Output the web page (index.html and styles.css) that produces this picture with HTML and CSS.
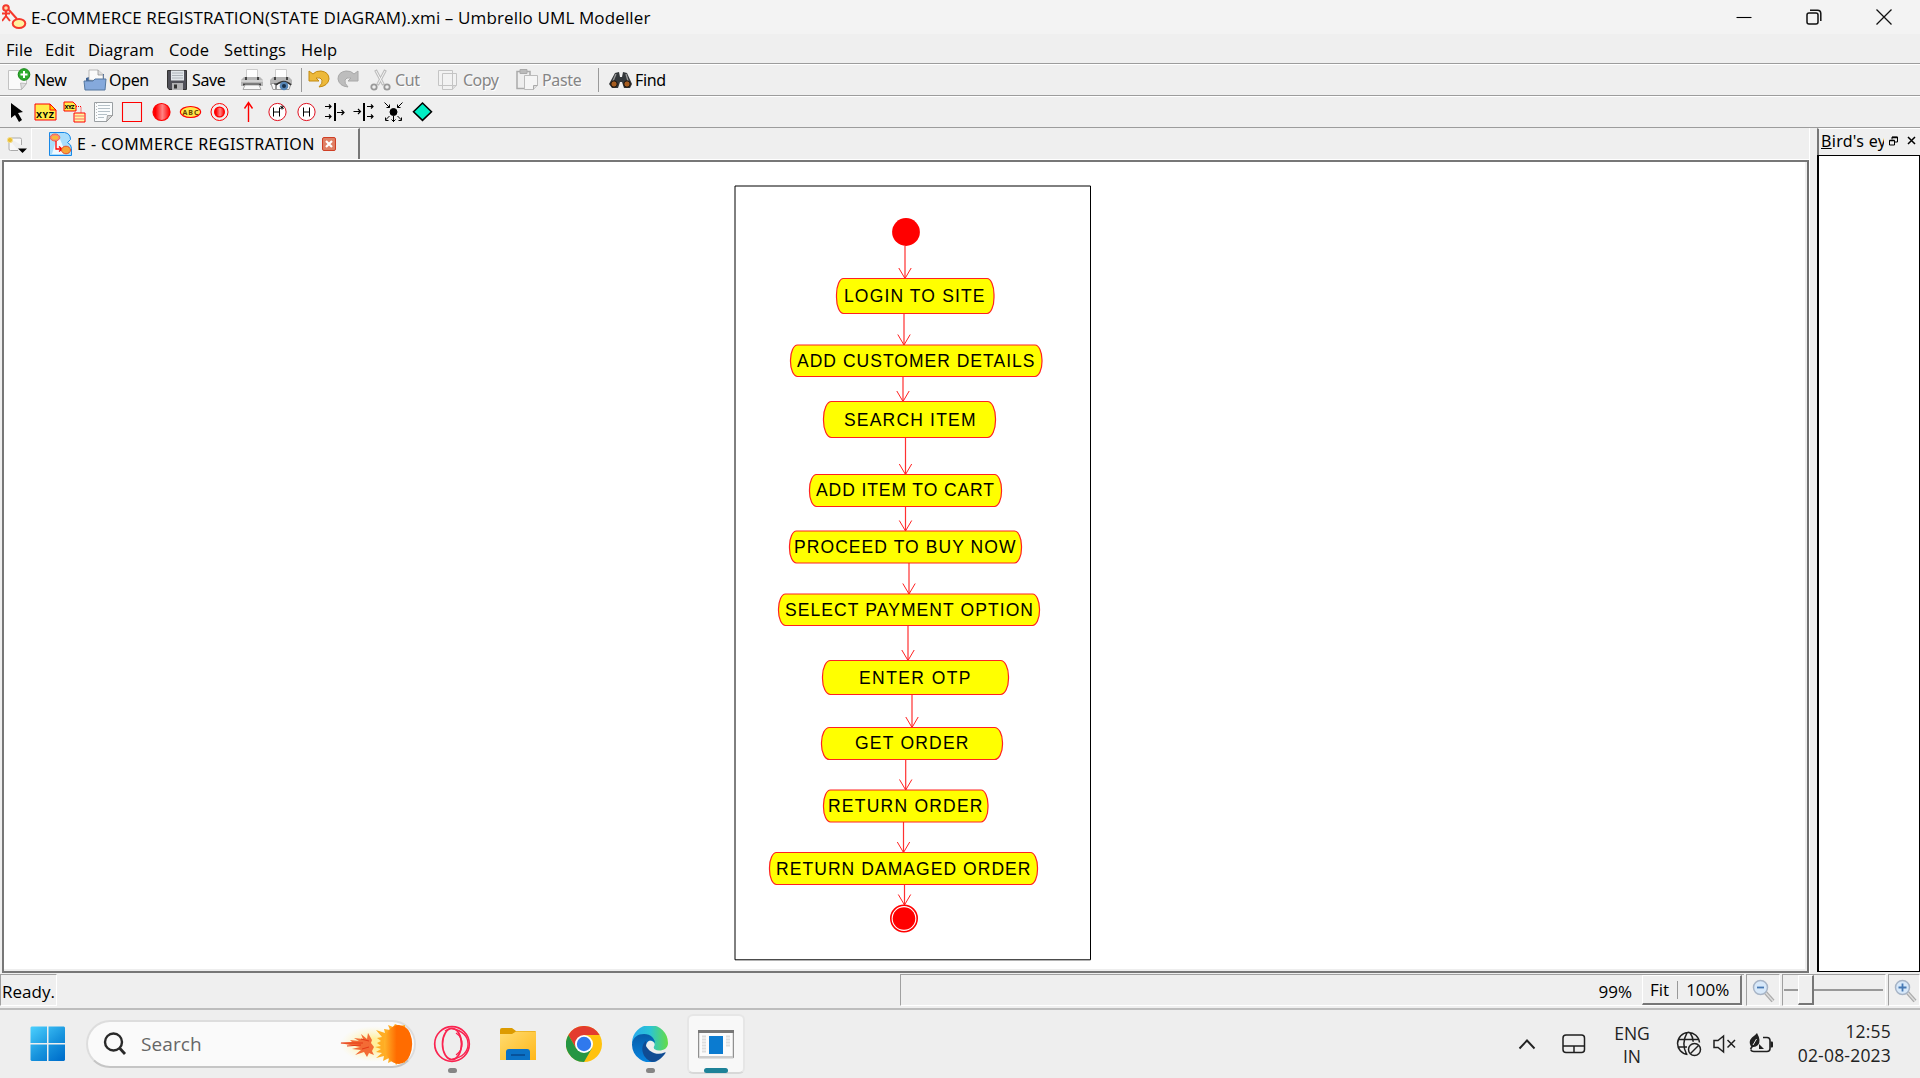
FILE: index.html
```html
<!DOCTYPE html>
<html lang="en">
<head>
<meta charset="utf-8">
<title>E-COMMERCE REGISTRATION(STATE DIAGRAM).xmi – Umbrello UML Modeller</title>
<link rel="stylesheet" href="styles.css">
</head>
<body>
<div class="screen">
  <header class="titlebar">
    <svg class="app-icon" width="25" height="26" viewBox="0 0 25 26" fill="none" stroke="#f5382c" stroke-width="2"><circle cx="4" cy="4" r="2.800" fill="#ffd9a8"/><path d="M4 7v6M0 9.500h8M4 12l-4 5M4 12l4 5M7 6l8 9"/><ellipse cx="17" cy="19.500" rx="6.300" ry="4.600" fill="#fff2a0"/></svg>
    <h1 class="title">E-COMMERCE REGISTRATION(STATE DIAGRAM).xmi – Umbrello UML Modeller</h1>
    <div class="window-buttons">
      <svg width="16" height="16" viewBox="0 0 16 16" stroke="#000" fill="none" stroke-width="1.1"><path d="M0.500 8.500h15"/></svg>
      <svg width="16" height="16" viewBox="0 0 16 16" stroke="#111" fill="none" stroke-width="1.500"><rect x="1" y="4" width="11" height="11" rx="2"/><path d="M4 1.200h7.500a3.300 3.300 0 0 1 3.300 3.300V12"/></svg>
      <svg width="16" height="16" viewBox="0 0 16 16" stroke="#111" fill="none" stroke-width="1.300"><path d="M.5.5l15 15M15.500.5l-15 15"/></svg>
    </div>
  </header>
  <nav class="menubar">
    <span class="m-file">File</span><span class="m-edit">Edit</span><span class="m-diagram">Diagram</span><span class="m-code">Code</span><span class="m-settings">Settings</span><span class="m-help">Help</span>
  </nav>
  <div class="toolbar main-tools">
    <button class="tool t-new"><svg width="24" height="24" viewBox="0 0 24 24"><path d="M1.500 2.500h18v13l-5 6h-13z" fill="#fafafa" stroke="#c2c2c2"/><path d="M19.500 15.500l-6-.5 1 6.500z" fill="#ddd" stroke="#aaa" stroke-width=".7"/><circle cx="17" cy="6.500" r="5.800" fill="#2eab2e" stroke="#118411"/><path d="M17 3v7M13.500 6.500h7" stroke="#fff" stroke-width="2"/></svg>New</button>
    <button class="tool t-open"><svg width="24" height="24" viewBox="0 0 24 24"><path d="M3 20V10l3-1V6h15v14z" fill="#3d6396"/><path d="M6 12V2h9l5 4.500V13z" fill="#fafafa" stroke="#aaa" stroke-width=".8"/><path d="M15 2v5h5" fill="#ddd" stroke="#888" stroke-width=".7"/><path d="M1 13h9l2-2h11l-1 11H2z" fill="#85a9dc" stroke="#54779f"/></svg>Open</button>
    <button class="tool t-save"><svg width="22" height="24" viewBox="0 0 22 24"><path d="M1.500 2.500h19v19H3l-1.500-2z" fill="#505058" stroke="#333"/><path d="M5 2.500h13v10H5z" fill="#e2e7eb"/><path d="M6 5h11M6 7.500h11M6 10h11" stroke="#aeb4ba"/><path d="M6 15h11v7H6z" fill="#b3b3b5"/><path d="M8 16.500h3v4H8z" fill="#333"/></svg>Save</button>
    <svg class="t-print" width="22" height="24" viewBox="0 0 22 24"><path d="M5.500 1.500h11v9h-11z" fill="#fff" stroke="#ccc"/><path d="M3 9h16l3 3v6H0v-6z" fill="#b5b5b5"/><path d="M4 9h2v3H4zM16 9h2v3h-2z" fill="#444"/><path d="M0 13h22" stroke="#eee"/><path d="M2 15.500h18v2H2z" fill="#444"/><path d="M4 17h14l2 4.500H2z" fill="#f8f8f8" stroke="#aaa"/></svg>
    <svg class="t-preview" width="23" height="24" viewBox="0 0 23 24"><path d="M5.500 1.500h11v9h-11z" fill="#fff" stroke="#ccc"/><path d="M3 9h16l3 3v5H0v-5z" fill="#b5b5b5"/><path d="M4 9h2v3H4zM16 9h2v3h-2z" fill="#444"/><path d="M1 15.500h20l-2 6H3z" fill="#f8f8f8" stroke="#999"/><path d="M6 17q8-7 15 0" stroke="#333" stroke-width="1.500" fill="none"/><circle cx="14" cy="18" r="4.300" fill="#5685b5"/><circle cx="14" cy="18" r="2" fill="#182f46"/><path d="M4 16h4M6 16v5" stroke="#333"/></svg>
    <i class="separator"></i>
    <svg class="t-undo" width="24" height="24" viewBox="0 0 24 24"><path d="M2 3v10h10l-3-3q5-1 6 2 1 3-3 7 9-1 10-8 0-7-8-8-5-.5-8 3z" fill="#edb93a" stroke="#c38a10"/></svg>
    <svg class="t-redo" width="24" height="24" viewBox="0 0 24 24"><path d="M22 3v10H12l3-3q-5-1-6 2-1 3 3 7-9-1-10-8 0-7 8-8 5-.5 8 3z" fill="#bdbdbd" stroke="#a8a8a8"/></svg>
    <button class="tool t-cut disabled"><svg width="21" height="24" viewBox="0 0 21 24" fill="none"><path d="M5.500 2l8 15M15.500 2l-8 15" stroke="#bdbdbd" stroke-width="3"/><path d="M6 3l7 13M15 3L8 16" stroke="#f5f5f5"/><circle cx="4" cy="19" r="2.700" stroke="#999" stroke-width="1.800"/><circle cx="17" cy="19" r="2.700" stroke="#999" stroke-width="1.800"/></svg>Cut</button>
    <button class="tool t-copy disabled"><svg width="22" height="24" viewBox="0 0 22 24" fill="#f2f2f2" stroke="#c4c4c4"><path d="M1.500 2.500h14v15h-14zM5.500 5.500h14v12l-4 4h-10z"/><path d="M19.500 17.500h-4v4" fill="#ddd"/></svg>Copy</button>
    <button class="tool t-paste disabled"><svg width="24" height="24" viewBox="0 0 24 24" fill="#eee" stroke="#aaa"><path d="M2 3.500h13v17H2z" stroke-width="1.500"/><path d="M5 1.500h7v4H5z" fill="#bbb"/><path d="M9.500 7.500h13v10l-4 4h-9z" fill="#f5f5f5" stroke="#bbb"/><path d="M22.500 17.500h-4v4" fill="#ddd"/></svg>Paste</button>
    <i class="separator second"></i>
    <button class="tool t-find"><svg width="23" height="24" viewBox="0 0 23 24"><path d="M6 5l4-1 1 5h2l1-5 4 1 5 11-2 4h-6l-2-6h-2l-2 6H3l-3-4z" fill="#34383b"/><path d="M7 6L4 13M17 6l2 7" stroke="#999" stroke-width="1.300"/><circle cx="5" cy="16" r="3.200" fill="#a65d20" stroke="#111"/><circle cx="18" cy="16" r="3.200" fill="#a65d20" stroke="#111"/></svg>Find</button>
  </div>
  <div class="toolbar diagram-tools">
    <svg viewBox="0 0 29 24"><path d="M9 3v15l4-3 4 7 3-2-4-7 5-1z" fill="#000"/></svg>
    <svg viewBox="0 0 29 24"><path d="M4 4h15l6 6v10H4z" fill="#ffec4a" stroke="red"/><path d="M19 4v6h6z" fill="#ffd000" stroke="red"/><text x="5" y="18" font-size="9" font-weight="bold" textLength="18">XYZ</text></svg>
    <svg viewBox="0 0 29 24"><path d="M4 2h9l3 3v6H4z" fill="#ffec4a" stroke="red"/><text x="4.500" y="9" font-size="6" font-weight="bold" textLength="10">XYZ</text><path d="M16 6.500h5v6" fill="none" stroke="red" stroke-dasharray="1 1"/><path d="M14 13h11v9H14z" fill="#fff7a0" stroke="red"/><path d="M14 16h11M14 19h11" stroke="#f66"/></svg>
    <svg viewBox="0 0 29 24"><path d="M5.500 2.500h18v13l-6 6h-12z" fill="#fafcfd" stroke="#9a9fa2"/><path d="M9 5.500h12M9 8.500h12M9 11.500h12M9 14.500h9M9 17.500h6" stroke="#b5c0c7"/><path d="M7.500 3v18" stroke="#bbb" stroke-dasharray="1 2"/><path d="M23.500 15.500h-5l-1 6z" fill="#d4d4d4" stroke="#888" stroke-width=".7"/></svg>
    <svg viewBox="0 0 29 24"><path d="M4.500 2.500h19v19h-19z" fill="none" stroke="red" stroke-width="1.100"/></svg>
    <svg viewBox="0 0 29 24"><defs><linearGradient id="ball"><stop offset=".15" stop-color="red"/><stop offset=".55" stop-color="#ff8585"/><stop offset="1" stop-color="red"/></linearGradient></defs><circle cx="14.500" cy="12" r="8.500" fill="url(#ball)" stroke="red" stroke-width="1.200"/></svg>
    <svg viewBox="0 0 29 24"><ellipse cx="14.500" cy="12" rx="10.200" ry="5.500" fill="#ffe94a" stroke="red" stroke-width="1.200"/><text x="6.500" y="14.600" font-size="7" font-weight="bold" fill="#640" textLength="16">ABC</text></svg>
    <svg viewBox="0 0 29 24"><circle cx="14.500" cy="12" r="8.500" fill="none" stroke="red"/><circle cx="14.500" cy="12" r="4.900" fill="url(#ball)" stroke="red" stroke-width="1.200"/></svg>
    <svg viewBox="0 0 29 24" fill="none" stroke="red" stroke-width="1.400"><path d="M14.500 22V2.500M10.500 8.500l4-6 4 6"/></svg>
    <svg viewBox="0 0 29 24"><circle cx="14.500" cy="12" r="8.600" fill="#fff" stroke="#e11020"/><path d="M10.500 7.500v9M16.500 7.500v9M10.500 12h6M19 5.500v4M17.300 6.500l3.400 2M20.700 6.500l-3.400 2" stroke="#000"/></svg>
    <svg viewBox="0 0 29 24"><circle cx="14.500" cy="12" r="8.600" fill="#fff" stroke="#e11020"/><path d="M11.500 7.500v9M17.500 7.500v9M11.500 12h6" stroke="#000"/></svg>
    <svg viewBox="0 0 29 24" fill="none" stroke="#000"><path d="M14 3v18" stroke-width="2"/><path d="M4 6.500h6M8 4.500l2 2-2 2M4 16.500h6M8 14.500l2 2-2 2M16 12.500h7M20.500 10l2.500 2.500-2.500 2.500" stroke-width="1.200"/></svg>
    <svg viewBox="0 0 29 24" fill="none" stroke="#000"><path d="M14 3v18" stroke-width="2"/><path d="M17 6.500h6M21 4.500l2 2-2 2M17 16.500h6M21 14.500l2 2-2 2M3.500 11.500h7M8 9l2.500 2.500L8 14" stroke-width="1.200"/></svg>
    <svg viewBox="0 0 29 24" fill="none" stroke="#000"><circle cx="14.500" cy="12" r="3.500" fill="#000"/><path d="M5.500 2.500l5 5M7.500 7.500h3v-3M23.500 2.500l-5 5M18.500 4.500v3h3M10.500 16l-4 4M6.500 17.500V20.500h3M18.500 16l4 4M19.500 20.500h3v-3M14.500 16v6M12.500 19.500l2 2 2-2"/></svg>
    <svg viewBox="0 0 29 24"><path d="M14.500 3l9 8.700-9 8.700-9-8.700z" fill="#00eec4" stroke="#000" stroke-width="1.500"/></svg>
  </div>

  <div class="workspace">
    <main class="editor">
      <div class="tabs">
        <svg class="new-tab" width="22" height="20" viewBox="0 0 22 20"><path d="M3 2h11q1.500 0 1.500 1.500V9M3 3v10q0 1.500 1.500 1.500H12" fill="#f8f8f8" stroke="#aaa"/><circle cx="4" cy="4" r="2.600" fill="#e8bd32" stroke="#f5df91"/><path d="M12 12.500h9l-4.500 4.500z"/></svg>
        <div class="tab">
          <svg width="25" height="26" viewBox="0 0 25 26"><path d="M1.500 1.500h15q6 1 6 7l-3 3q4 2 4 6v7h-22z" fill="#a9ddfc" stroke="#1688e8"/><path d="M10 3l-6 20h14z" fill="#eff9ff"/><ellipse cx="7" cy="6.500" rx="4.800" ry="3.500" fill="#f69" stroke="#ee7042"/><ellipse cx="7" cy="6.500" rx="3.600" ry="2.300" fill="#f8b939"/><path d="M8 10v8h5M11 15.500l3 2.500-3 2.500" fill="none" stroke="red" stroke-width="1.300"/><ellipse cx="18" cy="19" rx="4.500" ry="3.800" fill="#f6a438" stroke="#e84c28"/></svg>
          <span>E - COMMERCE REGISTRATION</span>
          <svg class="tab-close" width="14" height="14" viewBox="0 0 14 14"><rect x=".5" y=".5" width="13" height="13" rx="1.500" fill="#df8065" stroke="#cf3f25"/><path d="M4 4l6 6M10 4l-6 6" stroke="#fff" stroke-width="2.200"/></svg>
        </div>
      </div>
      <div class="canvas">
        <svg class="diagram" width="358" height="777" viewBox="733 184 358 777">
          <defs><marker id="open-arrow" markerUnits="userSpaceOnUse" markerWidth="16" markerHeight="12" refX="10.500" refY="7" orient="auto" overflow="visible"><path d="M0 .8L10.500 7 0 13.200" fill="none" stroke="#ff2020"/></marker></defs>
          <path d="M735 186H1090.500V959.800H735z" fill="#fff" stroke="#000"/>
          <g class="links">
            <path d="M905 246V278.500"/><path d="M904 313V345"/><path d="M903 376V401.500"/><path d="M905.500 437V474.500"/><path d="M905.500 506V531"/><path d="M909 563V594"/><path d="M908 625V660.500"/><path d="M912 694V727.500"/><path d="M905.700 759V790"/><path d="M903.500 822V852.500"/><path d="M904.500 884V905"/>
          </g>
          <circle cx="906" cy="232" r="13.900" fill="red"/>
          <g class="states">
            <rect x="836.500" y="278.500" width="157.500" height="35" rx="7" ry="16"/>
            <rect x="790.500" y="345" width="251.500" height="31.500" rx="7" ry="15"/>
            <rect x="823.500" y="401.500" width="172" height="36" rx="8" ry="17"/>
            <rect x="809.500" y="474.500" width="192" height="32" rx="7" ry="15"/>
            <rect x="789.500" y="531" width="232" height="32" rx="7" ry="15"/>
            <rect x="778.500" y="594" width="261" height="31.500" rx="7" ry="15"/>
            <rect x="822.500" y="660.500" width="186" height="34" rx="8" ry="16"/>
            <rect x="821.500" y="727.500" width="181" height="32" rx="8" ry="15"/>
            <rect x="823.500" y="790" width="164.500" height="32" rx="7" ry="15"/>
            <rect x="769.500" y="852.500" width="268" height="32" rx="7" ry="15"/>
          </g>
          <g class="labels">
            <text x="844" y="302" textLength="140.500">LOGIN TO SITE</text>
            <text x="797" y="367" textLength="237.500">ADD CUSTOMER DETAILS</text>
            <text x="844" y="426" textLength="131.500">SEARCH ITEM</text>
            <text x="816" y="496" textLength="178">ADD ITEM TO CART</text>
            <text x="794" y="553" textLength="221.500">PROCEED TO BUY NOW</text>
            <text x="785" y="616" textLength="248">SELECT PAYMENT OPTION</text>
            <text x="859" y="684" textLength="111.500">ENTER OTP</text>
            <text x="855" y="749" textLength="113.500">GET ORDER</text>
            <text x="828" y="812" textLength="154.500">RETURN ORDER</text>
            <text x="776" y="875" textLength="254.500">RETURN DAMAGED ORDER</text>
          </g>
          <circle cx="904" cy="918.500" r="13.200" fill="#fff" stroke="red" stroke-width="1.600"/><circle cx="904" cy="918.500" r="11.300" fill="red"/>
        </svg>
      </div>
    </main>
    <aside class="dock">
      <div class="dock-title"><span><u>B</u>ird's eye</span>
        <svg width="9" height="10" viewBox="0 0 9 10" fill="none" stroke="#000"><path d="M3 3.500V1h5.500v5H6"/><path d="M3 1.500h5.500M.5 4.500h5" stroke-width="1.500"/><path d="M.5 4.500h5v4.500h-5z"/></svg>
        <svg width="9" height="9" viewBox="0 0 9 9" stroke="#000" stroke-width="1.500"><path d="M1 1l7 7M8 1L1 8"/></svg>
      </div>
      <div class="dock-view"></div>
    </aside>
  </div>

  <div class="statusbar">
    <div class="ready">Ready.</div>
    <div class="zoom-value"><span>99%</span><div class="zoom-buttons"><span>Fit</span><i></i><span>100%</span></div></div>
    <div class="sunken zoom-out"><svg width="24" height="24" viewBox="0 0 24 24"><path d="M13 13l8 9" stroke="#aaa" stroke-width="4"/><path d="M13 13l8 9" stroke="#ddd" stroke-width="1.500"/><circle cx="8.500" cy="8.500" r="7" fill="#d7e8f9" stroke="#a7b4c6" stroke-width="1.500"/><path d="M5 8.500h7" stroke="#4779b4" stroke-width="1.800"/></svg></div>
    <div class="sunken slider"><i class="track-left"></i><i class="handle"></i><i class="track-right"></i></div>
    <div class="sunken zoom-in"><svg width="24" height="24" viewBox="0 0 24 24"><path d="M13 13l8 9" stroke="#aaa" stroke-width="4"/><path d="M13 13l8 9" stroke="#ddd" stroke-width="1.500"/><circle cx="8.500" cy="8.500" r="7" fill="#d7e8f9" stroke="#a7b4c6" stroke-width="1.500"/><path d="M4.500 8.500h8M8.500 4.500v8" stroke="#4779b4" stroke-width="1.800"/></svg></div>
  </div>

  <footer class="taskbar">
    <svg class="start" width="36" height="36" viewBox="0 0 36 36"><defs><linearGradient id="win" gradientUnits="userSpaceOnUse" x1="0" y1="0" x2="28" y2="36"><stop stop-color="#4dd2ff"/><stop offset=".6" stop-color="#1793dd"/><stop offset="1" stop-color="#0070cc"/></linearGradient></defs><path d="M1.500.5H17V17H.5V1.500zM18.500.5H34l1 1V17H18.500zM.5 18.500H17V35H1.500l-1-1zM18.500 18.500H35V34l-1 1H18.500z" fill="url(#win)"/></svg>
    <div class="search">
      <svg width="24" height="24" viewBox="0 0 24 24" fill="none" stroke="#292929" stroke-width="2.400"><circle cx="10.500" cy="10" r="8.500"/><path d="M16.500 16l5.500 6" stroke-width="2.800"/></svg>
      <span>Search</span>
      <svg class="comet" width="75" height="43" viewBox="0 0 75 43"><defs><radialGradient id="glow"><stop offset=".3" stop-color="#ffef9d"/><stop offset="1" stop-color="#fff6c8" stop-opacity="0"/></radialGradient><linearGradient id="sun"><stop stop-color="#ffb52b"/><stop offset=".45" stop-color="#ff6c00"/></linearGradient></defs><ellipse cx="36" cy="21" rx="34" ry="18" fill="url(#glow)"/><path d="M2 20l12-1-2-2 9 1-5-3 9 1-2-5 6 5 1-6 4 7-1 3 3 4-2 4 2 4-5-2-2 4-3-5-9 3 6-5-9-1 8-2z" fill="#f36b35"/><path d="M3 20h22M9 23l14-1M24 26l7-2M23 16l8 2" stroke="#e43a16" fill="none"/><path d="M57 1l-2 3-5-2 2 5-6-1 1 4-9-3 6 7-5 1 4 3-4 2 4 3-6 1 6 2-5 3 6 1-6 5 8-2-1 5 6-3-1 5 6-3 2 5 4-4 5 2V2l-5 1z" fill="#ffad24"/><path d="M61 2a15 19.500 0 0 0 0 39q8-1 11-9a30 30 0 0 0 0-22q-3-7-11-8z" fill="url(#sun)"/></svg>
    </div>
    <div class="task opera"><svg width="38" height="38" viewBox="0 0 38 38" fill="none" stroke="#fa234f"><circle cx="19" cy="19" r="17.300" stroke-width="1.700"/><ellipse cx="19" cy="19" rx="9.500" ry="15.500" stroke-width="1.700"/><path d="M12 6q4-3 7-2.500Q35 7 35 19T19 34.500M23 8q6 4 6 11t-6 11" stroke-width="1.300"/></svg><i class="dot"></i></div>
    <div class="task"><svg width="36" height="36" viewBox="0 0 36 36"><defs><linearGradient id="fold" x2="1" y2="1"><stop stop-color="#ffdc71"/><stop offset="1" stop-color="#ffb719"/></linearGradient></defs><path d="M0 4q0-2 2-2h10l4 3h19q1 0 1 2v5H0z" fill="#dc9b00"/><path d="M0 8h12l4-2.500h20V34H0z" fill="url(#fold)"/><path d="M6 34V26q0-3 3-3h18q3 0 3 3v8z" fill="#0b72c6"/><path d="M11 29h14" stroke="#07529b" stroke-width="2"/></svg></div>
    <div class="task"><svg width="36" height="36" viewBox="0 0 36 36"><circle cx="18" cy="18" r="18" fill="#ffc20e"/><path d="M18 9h15.600A18 18 0 0 0 2.400 9L10.200 22.500z" fill="#e33b2e"/><path d="M2.400 9A18 18 0 0 0 18 36l7.800-13.500H10.200z" fill="#259643"/><circle cx="18" cy="18" r="9" fill="#fff"/><circle cx="18" cy="18" r="7.200" fill="#3079ed"/></svg></div>
    <div class="task"><svg width="36" height="36" viewBox="0 0 36 36"><defs><linearGradient id="edge-top"><stop stop-color="#27a9ef"/><stop offset=".5" stop-color="#2bc4d4"/><stop offset="1" stop-color="#65dc45"/></linearGradient><linearGradient id="edge-left" x2="0" y2="1"><stop stop-color="#075ba8"/><stop offset="1" stop-color="#0785e0"/></linearGradient></defs><path d="M0 17A18 18 0 0 1 36 17c0 5-4 7.500-9 7.500-4 0-6-2-5-4 2-3-1-6-5-6z" fill="url(#edge-top)"/><path d="M0 18C1 11 6 8 12 8c7 0 11 5 11 9-4-5-9-2-9 4 0 8 6 14 11 14A18 18 0 0 1 0 18z" fill="url(#edge-left)"/><path d="M14 15c-6 4-5 17 6 21 6 0 11-5 13.500-9q.500-1-1-.5C25 30 17 26 14 20z" fill="#104c93"/></svg><i class="dot"></i></div>
    <div class="task active"><svg width="36" height="36" viewBox="0 0 36 36"><path d="M.7 4.700h34.600v27H.7z" fill="#fbfbfb" stroke="#777"/><path d="M0 4h36v3H0z" fill="#777"/><path d="M1 31h34" stroke="#ccc" stroke-width="2"/><path d="M4 10.500h4M4 13.500h4M4 16.500h4M4 19.500h4M4 22.500h4M4 25.500h4M28 10.500h4M28 13.500h4M28 16.500h4M28 19.500h4" stroke="#ddd" stroke-width="2"/><rect x="11" y="10" width="14" height="18" fill="#0b7bd0"/></svg><i class="bar"></i></div>
    <div class="tray">
      <svg class="chevron" width="18" height="12" viewBox="0 0 18 12" fill="none" stroke="#222" stroke-width="1.900"><path d="M1.500 10.500L9 2.500l7.500 8"/></svg>
      <svg class="touchpad" width="24" height="20" viewBox="0 0 24 20" fill="none" stroke="#1f1f1f" stroke-width="1.500"><rect x="1" y="1" width="21.500" height="17.500" rx="3"/><path d="M1 12h21.500M12 12v6.500"/></svg>
      <div class="language"><span>ENG</span><span>IN</span></div>
      <svg class="globe" width="26" height="26" viewBox="0 0 26 26" fill="none" stroke="#202020" stroke-width="1.500"><path d="M11.500 23.500A11 11 0 1 1 23.500 11.500M2 8.500h20M2 16h9M10.500 23Q5 12 11 1.800q1.500-1 3 0 3 4 3.200 9"/><circle cx="18.500" cy="18.500" r="6"/><path d="M14.500 22.500l8-8"/></svg>
      <svg class="speaker" width="25" height="20" viewBox="0 0 25 20" fill="none" stroke="#202020" stroke-width="1.500"><path d="M2 6.500h4l5.500-4.500v16L6 13.500H2zM15.500 6l7.500 7.500M23 6l-7.500 7.500"/></svg>
      <svg class="battery" width="27" height="24" viewBox="0 0 27 24" fill="none" stroke="#202020" stroke-width="1.600"><path d="M15 5.500h4q3 0 3 3v8q0 3-3 3H6q-3 0-3-2"/><path d="M22.500 9.500h1.500q1 0 1 1v4q0 1-1 1h-1.500z" fill="#202020" stroke="none"/><path d="M9 1q4.500 8 1 12-3 3-7 1.500-3-5 1-9 3-2 5-4.500z" fill="#202020" stroke="none"/><path d="M2.500 17L8 9" stroke="#202020"/><path d="M5 13l3.500-6" stroke="#eee" stroke-width="1"/><path d="M11 12v5h5" fill="#202020" stroke="none"/></svg>
      <div class="clock"><span class="time">12:55</span><span>02-08-2023</span></div>
    </div>
  </footer>
</div>
</body>
</html>
```
FILE: styles.css
```css
* { box-sizing: border-box; }
body { margin: 0; overflow: hidden; color: #000; background: #efefef; font-family: "Noto Sans", sans-serif; }
svg { display: block; flex: none; }
.screen { width: 1920px; height: 1078px; display: flex; flex-direction: column; }

.titlebar { height: 34px; flex: none; display: flex; align-items: center; background: #f3f3f3; padding: 0 18px 0 2px; }
.title { margin: 0 0 0 4px; font-family: "Open Sans", sans-serif; font-size: 17px; font-weight: 400; line-height: 35px; white-space: nowrap; letter-spacing: .13px; }
.window-buttons { margin: 0 10px 0 auto; display: flex; gap: 54px; }

.menubar { height: 29px; flex: none; display: flex; padding-left: 6px; font-family: "Open Sans", sans-serif; font-size: 16.500px; line-height: 31px; letter-spacing: .1px; }
.menubar span { white-space: nowrap; }
.m-file { width: 39px; }
.m-edit { width: 43px; }
.m-diagram { width: 81px; }
.m-code { width: 55px; }
.m-settings { width: 77px; }

.toolbar { height: 32px; flex: none; display: flex; align-items: center; border-top: 1px solid #9c9c9c; box-shadow: inset 0 1px #fff; }
.main-tools { padding-left: 7px; }
.tool { display: flex; align-items: center; gap: 4px; height: 30px; flex: none; border: 0; padding: 0; background: none; color: #000; font-family: "Noto Sans", sans-serif; font-size: 16px; letter-spacing: -.35px; line-height: 30px; white-space: nowrap; }
.disabled { color: #858585; text-shadow: 1px 1px #fff; }
.t-new { width: 76px; gap: 3px; }
.t-open { width: 83px; gap: 2px; }
.t-save { width: 75px; }
.t-print { width: 22px; margin-right: 7px; }
.t-preview { margin-right: 8px; }
.separator { width: 1px; height: 24px; flex: none; background: #9a9a9a; margin-right: 5px; }
.t-undo { margin-right: 5px; }
.t-redo { margin-right: 10px; }
.t-cut { width: 67px; }
.t-copy { width: 78px; letter-spacing: -.5px; }
.t-paste { width: 83px; gap: 3px; }
.second { margin-right: 10px; margin-left: 0; }
.t-find { gap: 3px; }
.diagram-tools { padding-left: 2px; }
.diagram-tools svg { width: 29px; height: 24px; font-family: "Noto Sans", sans-serif; }

.workspace { height: 846px; flex: none; display: flex; border-top: 1px solid #9c9c9c; }
.editor { width: 1810px; display: flex; flex-direction: column; border-right: 1px solid #fff; }
.tabs { height: 32px; flex: none; display: flex; border-bottom: 1px solid #fff; }
.new-tab { margin: 8px 3px 0 6px; }
.tab { width: 329px; height: 31px; display: flex; align-items: center; padding: 0 0 1px 16px; background: #f0f0f0; border-left: 1px solid #fff; border-top: 1px solid #fff; border-right: 2px solid #777; font-size: 16px; }
.tab span { width: 244px; margin-left: 4px; white-space: nowrap; letter-spacing: .42px; }
.tab-close { margin-left: 1px; }
.canvas { height: 813px; width: 1807px; margin-left: 2px; background: #fff; border: 2px solid #777; border-right: 2px solid #707070; box-shadow: inset 0 -2px #eee, inset -2px 0 #eee; padding: 22px 0 0 729px; }
.links { stroke: #ff3030; stroke-width: 1.200; fill: none; }
.links path { marker-end: url(#open-arrow); }
.states { fill: #ff0; stroke: #f22; stroke-width: 1.200; }
.labels { font: 17.500px "Liberation Sans", sans-serif; fill: #000; }

.dock { width: 110px; flex: none; padding-left: 7px; display: flex; flex-direction: column; }
.dock-title { height: 27px; flex: none; display: flex; align-items: center; gap: 9px; padding: 0 4px 3px 2px; border-left: 2px solid #777; border-top: 1px solid #fff; font-size: 16px; }
.dock-title span { width: 63px; height: 24px; line-height: 25px; flex: none; overflow: hidden; white-space: nowrap; letter-spacing: .3px; margin-right: -4px; }
.dock-view { height: 817px; background: #fff; border: 1px solid #000; border-left-width: 2px; }

.statusbar { height: 35px; flex: none; display: flex; padding: 1px 0 2px; font-family: "Open Sans", sans-serif; font-size: 17px; line-height: 34px; }
.ready { width: 57px; padding-left: 1px; border: 1px solid #a0a0a0; border-right-color: #fff; border-bottom-color: #fff; white-space: nowrap; letter-spacing: 0; }
.sunken { border: 1px solid #a0a0a0; border-right-color: #fff; border-bottom-color: #fff; }
.zoom-value { width: 844px; margin: 0 2px 0 843px; display: flex; justify-content: flex-end; border-top: 1px solid #a0a0a0; border-left: 1px solid #a0a0a0; border-bottom: 1px solid #fff; }
.zoom-value > span { margin-right: 10px; }
.zoom-buttons { width: 100px; height: 30px; display: flex; gap: 8px; align-items: center; padding-left: 7px; border: 1px solid #fff; border-right: 2px solid #777; border-bottom: 2px solid #777; margin-right: 2px; }
.zoom-buttons i { width: 1px; height: 18px; background: #999; }
.zoom-out { width: 34px; padding: 4px 5px; margin-right: 2px; }
.slider { width: 104px; margin-right: 2px; display: flex; padding-left: 1px; }
.track-left { width: 14px; height: 2px; margin-top: 14px; background: #999; }
.handle { width: 16px; height: 30px; border: 1px solid #fff; border-right: 2px solid #777; border-bottom: 2px solid #777; }
.track-right { width: 69px; height: 2px; margin-top: 14px; background: #999; }
.zoom-in { width: 32px; padding: 4px 5px; }

.taskbar { height: 70px; flex: none; display: flex; align-items: center; border-top: 2px solid #bdbdbd; background: #eee; padding-left: 30px; color: #222; font-family: "Open Sans", sans-serif; }
.start { margin-right: 20px; }
.search { width: 330px; height: 48px; flex: none; display: flex; align-items: center; padding: 0 1px 0 15px; border: 2px solid #ddd; border-bottom-color: #c5c5c5; border-radius: 24px; background: #fafafa; color: #666; font-size: 19px; margin-right: 17px; }
.search span { margin-left: 14px; letter-spacing: .1px; }
.comet { margin-left: auto; }
.task { width: 38px; height: 58px; margin-right: 28px; flex: none; display: flex; flex-direction: column; align-items: center; justify-content: center; position: relative; }
.dot, .bar { position: absolute; bottom: 0; width: 9px; height: 5px; border-radius: 3px; background: #858585; }
.active { width: 58px; height: 60px; margin: 0 0 0 -10px; background: #f8f8f8; border: 2px solid #e6e6e6; border-bottom-color: #d8d8d8; border-radius: 6px; }
.bar { width: 24px; background: #1d8298; bottom: -1px; }
.tray { margin-left: auto; padding-right: 29px; display: flex; align-items: center; font-size: 17.500px; line-height: 23px; }
.chevron { margin-right: 26px; }
.touchpad { margin-right: 28px; }
.language { width: 36px; margin: 2px 26px 0 0; display: flex; flex-direction: column; align-items: center; letter-spacing: -.1px; }
.globe { margin-right: 10px; }
.speaker { margin-right: 11px; }
.battery { margin-right: 22px; }
.clock { width: 94px; display: flex; flex-direction: column; align-items: flex-end; white-space: nowrap; letter-spacing: .2px; line-height: 24px; margin-top: -2px; }
```
